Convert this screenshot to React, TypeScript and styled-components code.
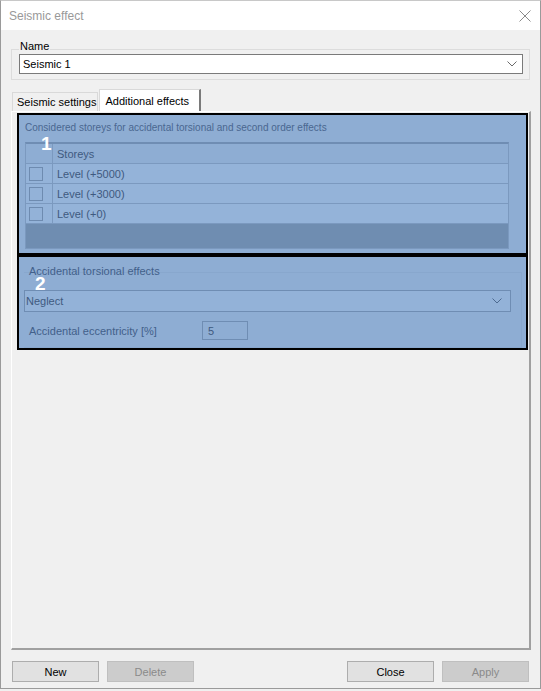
import React from "react";
import styled, { createGlobalStyle } from "styled-components";

const GlobalStyle = createGlobalStyle`
  html, body {
    margin: 0;
    padding: 0;
    background: #f0f0f0;
  }
  * {
    box-sizing: border-box;
  }
  body {
    font-family: "Liberation Sans", Arial, sans-serif;
    font-size: 11px;
  }
`;

const storeys = ["Level (+5000)", "Level (+3000)", "Level (+0)"];

const Chevron = ({ color }: { color: string }) => (
  <svg width="10" height="6" viewBox="0 0 10 6">
    <path d="M0.5 0.5 L5 5 L9.5 0.5" fill="none" stroke={color} strokeWidth="1" />
  </svg>
);

const App = () => {
  return (
    <>
      <GlobalStyle />
      <Window>
        <TitleBar>
          <Title>Seismic effect</Title>
          <CloseIcon width="12" height="12" viewBox="0 0 12 12">
            <path d="M0.5 0.5 L11.5 11.5 M11.5 0.5 L0.5 11.5" stroke="#8a8a8a" strokeWidth="1" />
          </CloseIcon>
        </TitleBar>

        <Body>
          <NameGroup>
            <GroupLabel>Name</GroupLabel>
            <Combo>
              <span>Seismic 1</span>
              <Chevron color="#6a6a6a" />
            </Combo>
          </NameGroup>

          <TabRow>
            <Tab>Seismic settings</Tab>
            <Tab $active>Additional effects</Tab>
          </TabRow>

          <TabPanel>
            <Highlight $height={142}>
              <Badge $left={22} $top={19}>1</Badge>
              <HintText>Considered storeys for accidental torsional and second order effects</HintText>
              <Grid>
                <HeaderRow>
                  <CheckCell />
                  <NameCell>Storeys</NameCell>
                </HeaderRow>
                {storeys.map((s) => (
                  <DataRow key={s}>
                    <CheckCell>
                      <CheckBox />
                    </CheckCell>
                    <NameCell>{s}</NameCell>
                  </DataRow>
                ))}
                <EmptyArea />
              </Grid>
            </Highlight>

            <Highlight $height={95}>
              <Badge $left={16} $top={17}>2</Badge>
              <InnerGroup>
                <InnerLabel>Accidental torsional effects</InnerLabel>
                <BlueCombo>
                  <span>Neglect</span>
                  <Chevron color="#4d6a90" />
                </BlueCombo>
                <FieldRow>
                  <FieldLabel>Accidental eccentricity [%]</FieldLabel>
                  <FieldInput>5</FieldInput>
                </FieldRow>
              </InnerGroup>
            </Highlight>
          </TabPanel>

          <ButtonRow>
            <ButtonGroup>
              <Button>New</Button>
              <Button disabled>Delete</Button>
            </ButtonGroup>
            <ButtonGroup>
              <Button>Close</Button>
              <Button disabled>Apply</Button>
            </ButtonGroup>
          </ButtonRow>
        </Body>
      </Window>
    </>
  );
};

export default App;

const Window = styled.div`
  width: 541px;
  height: 689px;
  background: #f0f0f0;
  border: 1px solid #9a9a9a;
  border-top-color: #c8c8c8;
  display: flex;
  flex-direction: column;
`;

const TitleBar = styled.div`
  height: 29px;
  background: #ffffff;
  display: flex;
  align-items: center;
  justify-content: space-between;
  padding: 0 9px 0 8px;
`;

const Title = styled.div`
  color: #999999;
  font-size: 12px;
`;

const CloseIcon = styled.svg`
  display: block;
`;

const Body = styled.div`
  flex: 1;
  display: flex;
  flex-direction: column;
  padding: 10px 9px 0 10px;
`;

const NameGroup = styled.div`
  position: relative;
  margin-top: 9px;
  margin-right: 1px;
  height: 31px;
  border: 1px solid #dcdcdc;
  padding: 4px 6px 0 7px;
`;

const GroupLabel = styled.div`
  position: absolute;
  top: -10px;
  left: 7px;
  padding: 0 1px;
  background: #f0f0f0;
  color: #000;
  font-size: 11px;
`;

const Combo = styled.div`
  height: 20px;
  background: #fff;
  border: 1px solid #7a7a7a;
  display: flex;
  align-items: center;
  justify-content: space-between;
  padding: 0 5px 0 3px;
  color: #000;
`;

const TabRow = styled.div`
  display: flex;
  align-items: flex-end;
  margin-top: 9px;
  height: 22px;
  padding-left: 1px;
`;

const Tab = styled.div<{ $active?: boolean }>`
  height: ${(p) => (p.$active ? 22 : 19)}px;
  padding: 0 ${(p) => (p.$active ? 10 : 1)}px 0 ${(p) => (p.$active ? 5 : 4)}px;
  display: flex;
  align-items: center;
  background: ${(p) => (p.$active ? "#ffffff" : "#f0f0f0")};
  border: 1px solid #d9d9d9;
  border-bottom: none;
  border-right: ${(p) => (p.$active ? "2px solid #7a7a7a" : "1px solid #d9d9d9")};
  margin-right: ${(p) => (p.$active ? 0 : 1)}px;
  color: #000;
  font-size: 11px;
`;

const TabPanel = styled.div`
  flex: 1;
  border-left: 1px solid #ffffff;
  border-right: 2px solid #a0a0a0;
  border-bottom: 2px solid #a0a0a0;
  border-top: 1px solid #ffffff;
  padding: 1px 0 0 5px;
  display: flex;
  flex-direction: column;
`;

const Highlight = styled.div<{ $height: number }>`
  position: relative;
  width: 511px;
  height: ${(p) => p.$height}px;
  background: #8eadd3;
  border: 2px solid #000000;
  padding: 6px 17px 0 6px;
`;

const Badge = styled.div<{ $left: number; $top: number }>`
  position: absolute;
  z-index: 2;
  left: ${(p) => p.$left}px;
  top: ${(p) => p.$top}px;
  color: #ffffff;
  font-family: "Liberation Sans", Arial, sans-serif;
  font-weight: bold;
  font-size: 19px;
  line-height: 1;
`;

const HintText = styled.div`
  color: #4a6790;
  font-size: 10px;
  height: 21px;
  line-height: 14px;
`;

const Grid = styled.div`
  border: 1px solid #7b99bf;
  border-top: 2px solid #6f8db3;
  display: flex;
  flex-direction: column;
  height: 107px;
`;

const HeaderRow = styled.div`
  display: flex;
  height: 20px;
  background: #8eadd3;
  border-bottom: 1px solid #7b99bf;
`;

const DataRow = styled.div`
  display: flex;
  height: 20px;
  background: #94b3d9;
  border-bottom: 1px solid #7b99bf;
`;

const CheckCell = styled.div`
  width: 27px;
  border-right: 1px solid #7b99bf;
  display: flex;
  align-items: center;
  padding-left: 3px;
`;

const CheckBox = styled.div`
  width: 14px;
  height: 14px;
  border: 1px solid #6e8bb0;
  background: #93b2d8;
`;

const NameCell = styled.div`
  flex: 1;
  display: flex;
  align-items: center;
  padding-left: 4px;
  color: #3f5a80;
  font-size: 11px;
`;

const EmptyArea = styled.div`
  flex: 1;
  background: #6f8db1;
`;

const InnerGroup = styled.div`
  position: relative;
  height: 76px;
  margin: 9px -13px 0 -1px;
  border: 1px solid #88a7cd;
  border-left: none;
`;

const InnerLabel = styled.div`
  position: absolute;
  top: -8px;
  left: 5px;
  color: #42608a;
  font-size: 11px;
`;

const BlueCombo = styled.div`
  margin-top: 17px;
  margin-right: 10px;
  height: 22px;
  background: #93b2d8;
  border: 1px solid #6f8db3;
  display: flex;
  align-items: center;
  justify-content: space-between;
  padding: 0 8px 0 1px;
  color: #3f5a80;
  font-size: 11px;
`;

const FieldRow = styled.div`
  display: flex;
  align-items: center;
  margin-top: 9px;
  padding-left: 5px;
`;

const FieldLabel = styled.div`
  width: 173px;
  color: #42608a;
  font-size: 11px;
`;

const FieldInput = styled.div`
  width: 46px;
  height: 19px;
  border: 1px solid #6f8db3;
  background: #8eadd3;
  color: #3f5a80;
  padding-left: 5px;
  display: flex;
  align-items: center;
  font-size: 11px;
`;

const ButtonRow = styled.div`
  display: flex;
  justify-content: space-between;
  padding: 11px 2px 0 1px;
  height: 38px;
`;

const ButtonGroup = styled.div`
  display: flex;
  gap: 8px;
`;

const Button = styled.button`
  width: 87px;
  height: 21px;
  font-family: "Liberation Sans", Arial, sans-serif;
  font-size: 11px;
  background: #e1e1e1;
  border: 1px solid #adadad;
  color: #000;
  padding: 0;

  &:disabled {
    background: #cccccc;
    border-color: #bfbfbf;
    color: #8a8a8a;
  }
`;
